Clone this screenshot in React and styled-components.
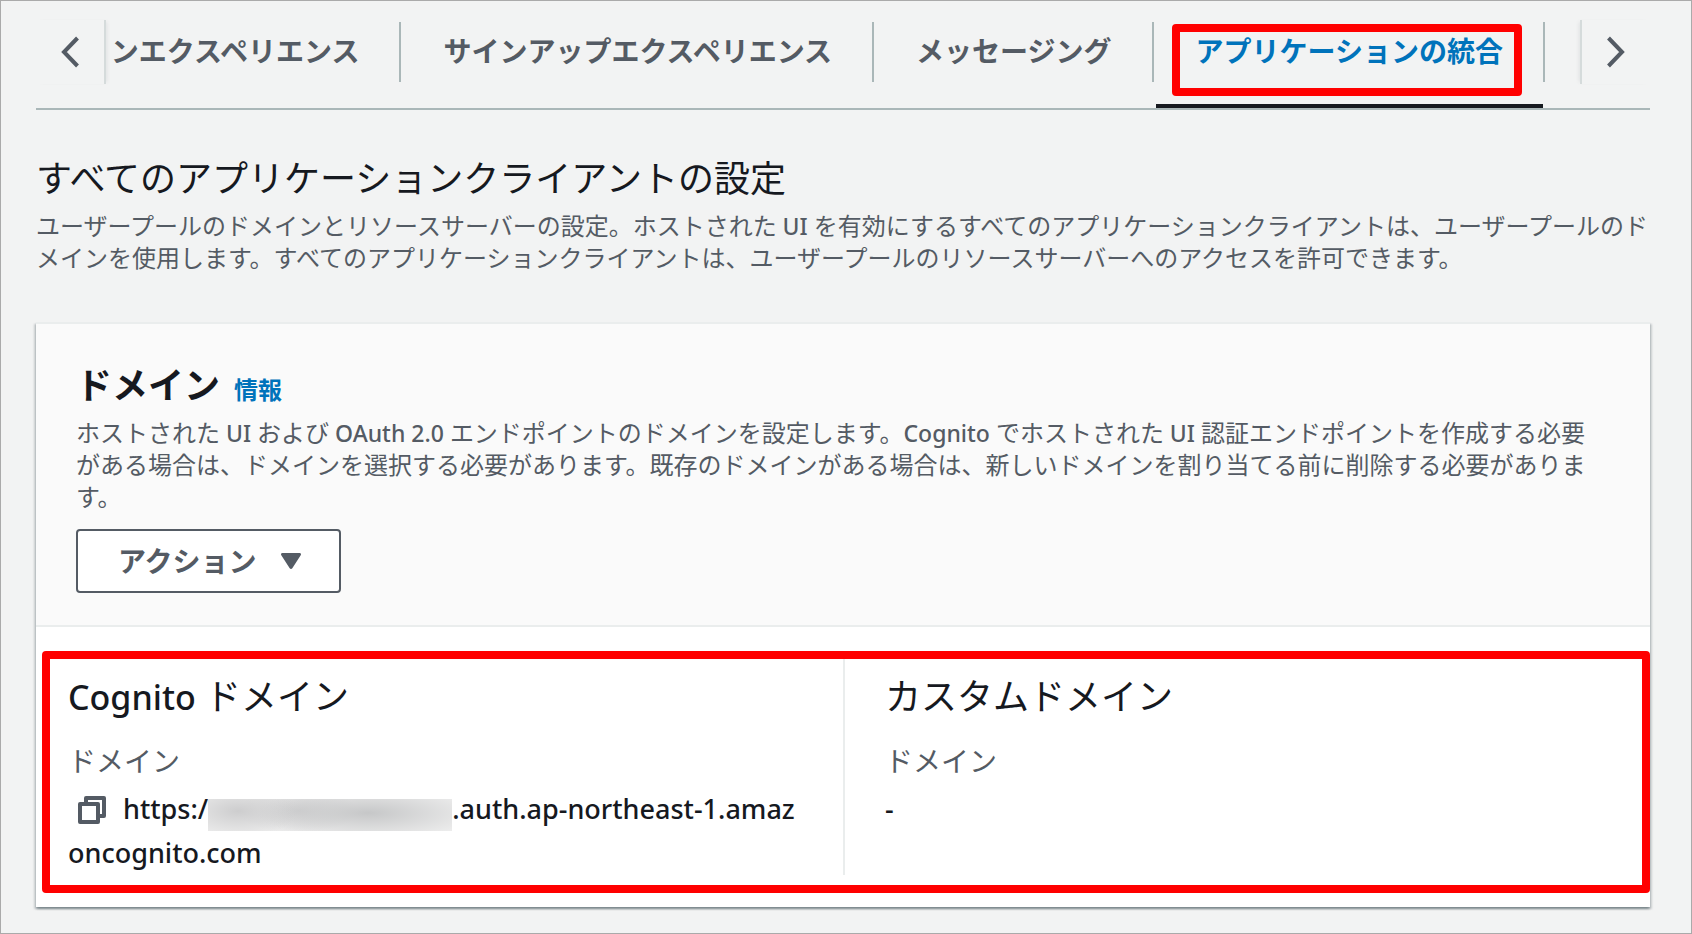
import React, { useState } from 'react';
import styled, { createGlobalStyle } from 'styled-components';

const GlobalStyle = createGlobalStyle`
  * {
    box-sizing: border-box;
  }

  body {
    margin: 0;
    background: #f2f3f3;
    color: #16191f;
    font-family: 'Noto Sans', 'Noto Sans CJK JP', sans-serif;
  }
`;

const Page = styled.div`
  min-height: 100vh;
  padding: 19px 41px 24px 35px;
  border: 1px solid #aaaaaa;
`;

const TabBar = styled.nav`
  display: flex;
  align-items: flex-start;
  border-bottom: 2px solid #aab7b8;
`;

const ScrollButton = styled.button`
  flex: none;
  display: flex;
  align-items: center;
  justify-content: center;
  width: 70px;
  height: 64px;
  padding: 0;
  border: 0 solid #d5dbdb;
  border-right-width: ${({ side }) => (side === 'left' ? '2px' : '0')};
  border-left-width: ${({ side }) => (side === 'right' ? '2px' : '0')};
  background: none;
  box-shadow: ${({ side }) => (side === 'left' ? '3px' : '-3px')} 0 4px -2px rgba(0, 28, 36, 0.08);
  color: #545b64;
  cursor: pointer;
`;

/* Scrolled to the end, the first tab runs out on the left */
const TabList = styled.ul`
  flex: 1;
  min-width: 0;
  display: flex;
  justify-content: flex-end;
  margin: 0;
  padding: 0 35px 0 0;
  overflow: hidden;
  list-style: none;
`;

const TabItem = styled.li`
  position: relative;
  flex: none;
  display: flex;
  padding-left: 2px;

  &::after {
    content: '';
    width: 2px;
    height: 60px;
    margin-top: 2px;
    background: #aab7b8;
  }
`;

const TabLink = styled.a`
  height: 88px;
  padding: 0 40px;
  border-bottom: 4px solid ${({ $active }) => ($active ? '#16191f' : 'transparent')};
  color: ${({ $active }) => ($active ? '#0073bb' : '#545b64')};
  font-size: 28px;
  font-weight: 700;
  line-height: 62px;
  text-decoration: none;
  white-space: nowrap;
`;

const TabHighlight = styled.span`
  position: absolute;
  top: 4px;
  left: 18px;
  right: 23px;
  height: 72px;
  border: 8px solid #ff0000;
  border-radius: 4px;
  pointer-events: none;
`;

const PageTitle = styled.h1`
  margin: 46px 0 8px;
  font-size: 36px;
  font-weight: 400;
  line-height: 46px;
`;

const Description = styled.p`
  margin: 0;
  color: #545b64;
  font-size: 24px;
  line-height: 32px;
`;

/* Latin words are set a little smaller and heavier than the kana around them */
const Latin = styled.span`
  font-size: ${({ $large }) => ($large ? '34px' : '23px')};
  font-weight: 500;
`;

const Card = styled.section`
  margin-top: 48px;
  border-top: 2px solid #eaeded;
  background: #ffffff;
  box-shadow:
    0 2px 2px 0 rgba(0, 28, 36, 0.3),
    2px 2px 2px 0 rgba(0, 28, 36, 0.15),
    -2px 2px 2px 0 rgba(0, 28, 36, 0.15);
`;

const CardHeader = styled.header`
  padding: 39px 32px 32px 40px;
  border-bottom: 2px solid #eaeded;
  background: #fafafa;
`;

const CardHeading = styled.div`
  display: flex;
  align-items: baseline;
  gap: 14px;
  margin-bottom: 4px;
  line-height: 46px;
`;

const CardTitle = styled.h2`
  margin: 0;
  font-size: 36px;
  font-weight: 700;
`;

const InfoLink = styled.a`
  color: #0073bb;
  font-size: 24px;
  font-weight: 700;
  text-decoration: none;
`;

const ActionButton = styled.button`
  display: flex;
  align-items: center;
  gap: 24px;
  height: 64px;
  margin-top: 16px;
  padding: 0 38px 0 40px;
  border: 2px solid #545b64;
  border-radius: 4px;
  background: #ffffff;
  color: #545b64;
  font-family: inherit;
  font-size: 28px;
  font-weight: 700;
  line-height: 36px;
  cursor: pointer;
`;

const CardBody = styled.div`
  position: relative;
  display: grid;
  grid-template-columns: 1fr 1fr;
  padding: 32px 0;
`;

const Column = styled.div`
  min-width: 0;
  padding: 16px 40px 0 ${({ $divided }) => ($divided ? '40px' : '32px')};
  border-left: ${({ $divided }) => ($divided ? '2px solid #eaeded' : '0')};
`;

const ColumnTitle = styled.h3`
  margin: 0 0 20px;
  font-size: 36px;
  font-weight: 400;
  line-height: 44px;
`;

const Fields = styled.dl`
  margin: 0;
  line-height: 44px;
`;

const FieldLabel = styled.dt`
  margin-bottom: 4px;
  color: #545b64;
  font-size: 28px;
`;

const FieldValue = styled.dd`
  margin: 0;
  font-size: 27px;
  font-weight: 500;
  word-break: break-all;
`;

const CopyButton = styled.button`
  width: 30px;
  height: 30px;
  margin: 0 16px 0 9px;
  padding: 0;
  border: 0;
  background: none;
  color: #545b64;
  vertical-align: -6px;
  cursor: pointer;

  svg {
    display: block;
  }
`;

const Redacted = styled.span`
  display: inline-block;
  width: 244px;
  height: 32px;
  background:
    radial-gradient(ellipse 60px 26px at 30px 12px, #cdcdce, transparent),
    radial-gradient(ellipse 110px 26px at 160px 14px, #c6c7c8, transparent),
    radial-gradient(ellipse 60px 22px at 90px 12px, #cfcfd0, transparent),
    #ececec;
  vertical-align: -12px;
`;

const BodyHighlight = styled.div`
  position: absolute;
  top: 24px;
  right: 0;
  bottom: 14px;
  left: 6px;
  border: 8px solid #ff0000;
  border-radius: 4px;
  pointer-events: none;
`;

const Chevron = ({ points }) => (
  <svg width="20" height="32" viewBox="0 0 20 32" fill="none" stroke="currentColor" strokeWidth="4" aria-hidden="true">
    <polyline points={points} />
  </svg>
);

const CaretIcon = () => (
  <svg width="20" height="16" viewBox="0 0 20 16" fill="currentColor" aria-hidden="true">
    <path d="M1.5 0h17c1.3 0 1.9 1.2 1.2 2.2l-8.4 13c-.6 1-2 1-2.6 0L.3 2.2C-.4 1.2 .2 0 1.5 0z" />
  </svg>
);

const CopyIcon = () => (
  <svg width="30" height="30" viewBox="0 0 30 30" fill="none" stroke="currentColor" strokeWidth="4" strokeLinejoin="round" aria-hidden="true">
    <path d="M9 9V3h18v18h-6" />
    <path d="M3 9h18v18H3z" />
  </svg>
);

const tabs = [
  { id: 'sign-in', label: 'ンエクスペリエンス' },
  { id: 'sign-up', label: 'サインアップエクスペリエンス' },
  { id: 'messaging', label: 'メッセージング' },
  { id: 'integration', label: 'アプリケーションの統合', highlighted: true },
];

const App = () => {
  const [activeTab, setActiveTab] = useState('integration');

  return (
    <>
      <GlobalStyle />
      <Page lang="ja">
        <TabBar>
          <ScrollButton side="left" aria-label="前へ">
            <Chevron points="17.500,2 4,16 17.500,30" />
          </ScrollButton>
          <TabList>
            {tabs.map((tab) => (
              <TabItem key={tab.id}>
                <TabLink href={`#${tab.id}`} $active={tab.id === activeTab} onClick={() => setActiveTab(tab.id)}>
                  {tab.label}
                </TabLink>
                {tab.highlighted && <TabHighlight />}
              </TabItem>
            ))}
          </TabList>
          <ScrollButton side="right" aria-label="次へ">
            <Chevron points="2.500,2 16,16 2.500,30" />
          </ScrollButton>
        </TabBar>

        <PageTitle>すべてのアプリケーションクライアントの設定</PageTitle>
        <Description>
          ユーザープールのドメインとリソースサーバーの設定。ホストされた<Latin> UI </Latin>
          を有効にするすべてのアプリケーションクライアントは、ユーザープールのド
          <br />
          メインを使用します。すべてのアプリケーションクライアントは、ユーザープールのリソースサーバーへのアクセスを許可できます。
        </Description>

        <Card>
          <CardHeader>
            <CardHeading>
              <CardTitle>ドメイン</CardTitle>
              <InfoLink href="#info">情報</InfoLink>
            </CardHeading>
            <Description>
              ホストされた<Latin> UI </Latin>および<Latin> OAuth 2.0 </Latin>
              エンドポイントのドメインを設定します。<Latin>Cognito </Latin>でホストされた<Latin> UI </Latin>
              認証エンドポイントを作成する必要
              <br />
              がある場合は、ドメインを選択する必要があります。既存のドメインがある場合は、新しいドメインを割り当てる前に削除する必要がありま
              <br />
              す。
            </Description>
            <ActionButton>
              アクション
              <CaretIcon />
            </ActionButton>
          </CardHeader>
          <CardBody>
            <Column>
              <ColumnTitle>
                <Latin $large>Cognito</Latin> ドメイン
              </ColumnTitle>
              <Fields>
                <FieldLabel>ドメイン</FieldLabel>
                <FieldValue>
                  <CopyButton aria-label="コピー">
                    <CopyIcon />
                  </CopyButton>
                  https:/
                  <Redacted />
                  .auth.ap-northeast-1.amazoncognito.com
                </FieldValue>
              </Fields>
            </Column>
            <Column $divided>
              <ColumnTitle>カスタムドメイン</ColumnTitle>
              <Fields>
                <FieldLabel>ドメイン</FieldLabel>
                <FieldValue>-</FieldValue>
              </Fields>
            </Column>
            <BodyHighlight />
          </CardBody>
        </Card>
      </Page>
    </>
  );
};

export default App;
